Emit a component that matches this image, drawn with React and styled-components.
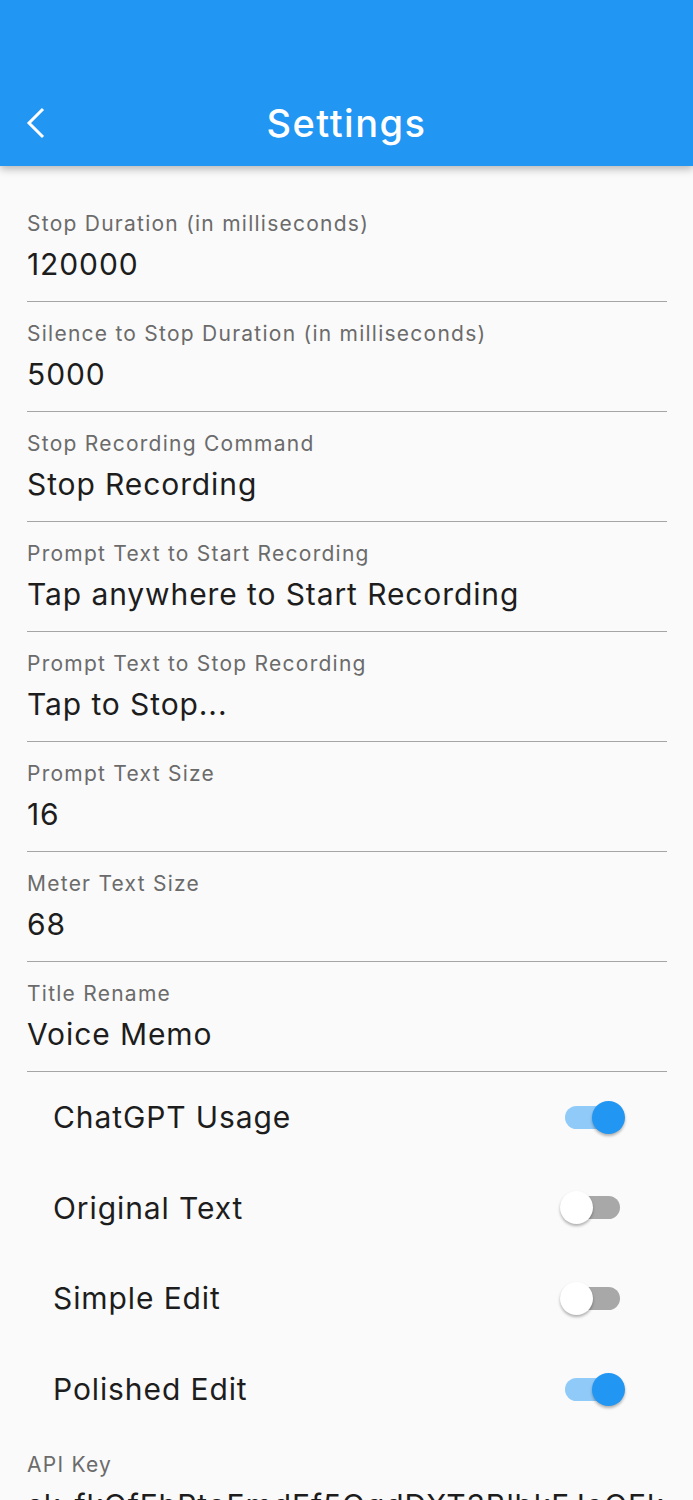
import React, { useState } from 'react';
import styled, { createGlobalStyle } from 'styled-components';

const GlobalStyle = createGlobalStyle`
  html, body {
    margin: 0;
    padding: 0;
    background: #fafafa;
  }
  body {
    font-family: Inter, "Noto Sans", "Liberation Sans", sans-serif;
    -webkit-font-smoothing: antialiased;
  }
`;

const Page = styled.div`
  width: 693px;
  height: 1500px;
  background: #fafafa;
  overflow: hidden;
`;

const AppBar = styled.header`
  height: 166px;
  background: #2196f3;
  box-shadow: 0 3px 8px rgba(0, 0, 0, 0.28);
  display: flex;
  flex-direction: column;
  justify-content: flex-end;
  position: relative;
  z-index: 1;
`;

const Toolbar = styled.div`
  height: 86px;
  display: grid;
  grid-template-columns: 80px 1fr 80px;
  align-items: center;
`;

const BackButton = styled.button`
  border: none;
  background: none;
  padding: 0 0 0 24px;
  display: flex;
  align-items: center;
  height: 100%;
  cursor: pointer;
`;

const Title = styled.h1`
  margin: 0;
  text-align: center;
  color: #fff;
  font-size: 38px;
  font-weight: 500;
  letter-spacing: 1.5px;
`;

const Content = styled.main`
  padding: 26px 26px 0 27px;
`;

const Field = styled.div`
  height: 110px;
  border-bottom: 1.4px solid #a5a5a5;
  box-sizing: border-box;
  display: flex;
  flex-direction: column;
  padding-top: 19px;
`;

const Label = styled.div`
  font-size: 21px;
  color: #6b6b6b;
  line-height: 26px;
  letter-spacing: 1.25px;
`;

const Value = styled.div`
  margin-top: 9px;
  font-size: 30px;
  color: #1d1d1d;
  line-height: 36px;
  letter-spacing: 0.9px;
  white-space: nowrap;
`;

const SwitchRow = styled.div`
  height: 90.6px;
  display: flex;
  align-items: center;
  justify-content: space-between;
  padding: 0 47px 0 26px;
`;

const SwitchLabel = styled.span`
  font-size: 30px;
  color: #1d1d1d;
  letter-spacing: 0.9px;
`;

const Track = styled.button`
  position: relative;
  width: 55px;
  height: 23px;
  border: none;
  padding: 0;
  border-radius: 12px;
  background: ${p => (p.$on ? '#90caf9' : '#a8a8a8')};
  cursor: pointer;
`;

const Thumb = styled.span`
  position: absolute;
  top: 50%;
  left: ${p => (p.$on ? '27px' : '-5px')};
  width: 33px;
  height: 33px;
  margin-top: -16.5px;
  border-radius: 50%;
  background: ${p => (p.$on ? '#2196f3' : '#ffffff')};
  box-shadow: 0 2px 3px rgba(0, 0, 0, 0.3);
`;

const ApiField = styled(Field)`
  border-bottom: none;
  padding-top: 18px;
`;

const fields = [
  ['Stop Duration (in milliseconds)', '120000'],
  ['Silence to Stop Duration (in milliseconds)', '5000'],
  ['Stop Recording Command', 'Stop Recording'],
  ['Prompt Text to Start Recording', 'Tap anywhere to Start Recording'],
  ['Prompt Text to Stop Recording', 'Tap to Stop...'],
  ['Prompt Text Size', '16'],
  ['Meter Text Size', '68'],
  ['Title Rename', 'Voice Memo'],
];

function Switch({ on, onToggle }) {
  return (
    <Track $on={on} onClick={onToggle} aria-pressed={on}>
      <Thumb $on={on} />
    </Track>
  );
}

export default function App() {
  const [toggles, setToggles] = useState({
    'ChatGPT Usage': true,
    'Original Text': false,
    'Simple Edit': false,
    'Polished Edit': true,
  });

  return (
    <Page>
      <GlobalStyle />
      <AppBar>
        <Toolbar>
          <BackButton aria-label="Back">
            <svg width="24" height="34" viewBox="0 0 24 34">
              <path d="M19 3 L5 17 L19 31" fill="none" stroke="#fff" strokeWidth="3" />
            </svg>
          </BackButton>
          <Title>Settings</Title>
          <div />
        </Toolbar>
      </AppBar>
      <Content>
        {fields.map(([label, value]) => (
          <Field key={label}>
            <Label>{label}</Label>
            <Value>{value}</Value>
          </Field>
        ))}
        {Object.keys(toggles).map(name => (
          <SwitchRow key={name}>
            <SwitchLabel>{name}</SwitchLabel>
            <Switch
              on={toggles[name]}
              onToggle={() => setToggles(t => ({ ...t, [name]: !t[name] }))}
            />
          </SwitchRow>
        ))}
        <ApiField>
          <Label>API Key</Label>
          <Value>sk-fkOfEhPtoEmdEf5OgdDXT3BlbkFJeOEk</Value>
        </ApiField>
      </Content>
    </Page>
  );
}
